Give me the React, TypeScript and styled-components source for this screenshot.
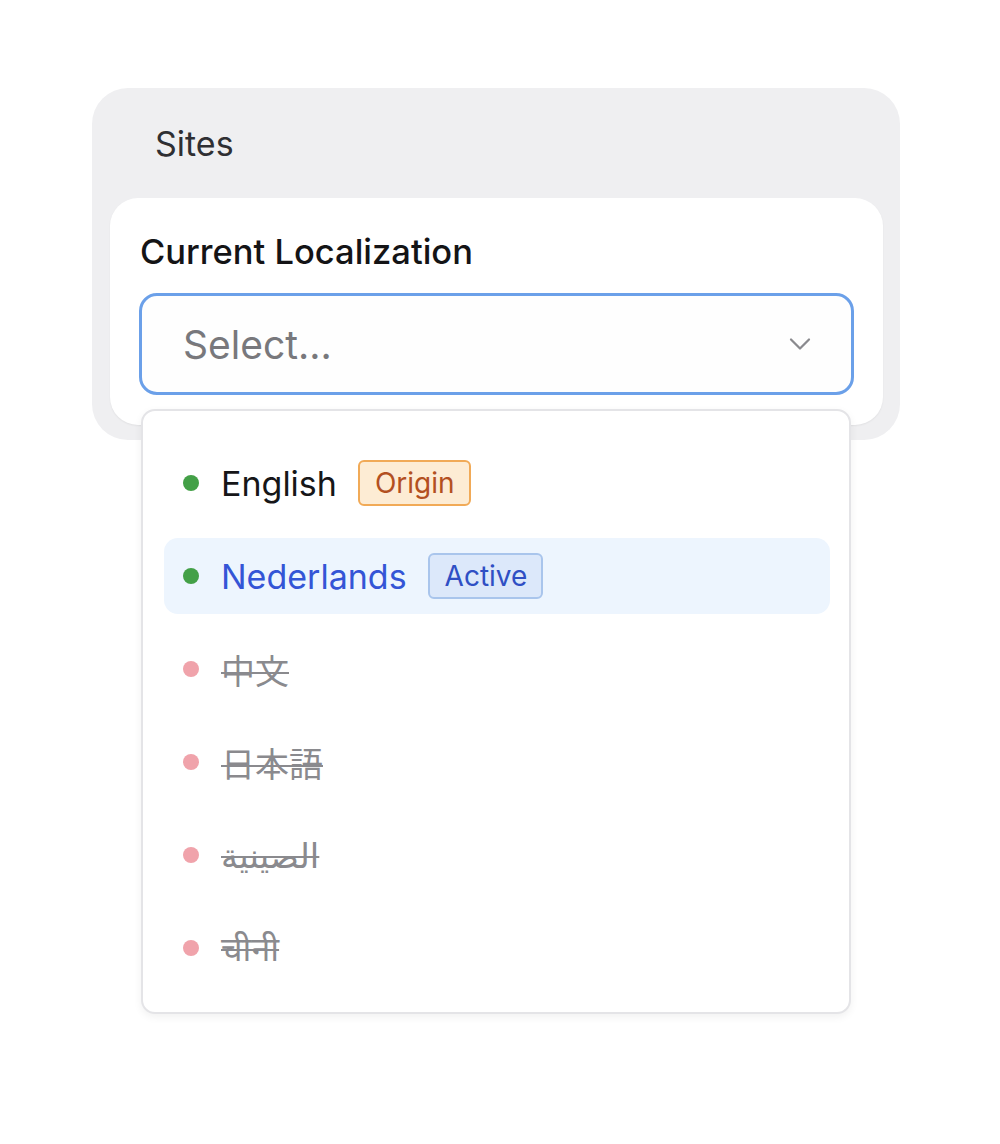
import React from 'react'
import styled, { createGlobalStyle } from 'styled-components'
import { ChevronDown } from 'lucide-react'

const GlobalStyle = createGlobalStyle`
  html, body {
    margin: 0;
    padding: 0;
    background: #ffffff;
  }
  body {
    font-family: Inter, "Noto Sans", "Noto Sans CJK SC", "DejaVu Sans", sans-serif;
    -webkit-font-smoothing: antialiased;
  }
`

const Page = styled.div`
  width: 1000px;
  height: 1144px;
  padding: 88px 0 0 92px;
  box-sizing: border-box;
`

const Panel = styled.div`
  width: 808px;
  background: #efeff1;
  border-radius: 36px;
  padding: 0 17px 15px 18px;
  box-sizing: border-box;
`

const PanelTitle = styled.div`
  padding: 35px 0 34px 45px;
  font-size: 34px;
  line-height: 41px;
  color: #2f2f33;
`

const Card = styled.div`
  background: #ffffff;
  border-radius: 28px;
  padding: 33px 29px 30px 29px;
  box-shadow: 0 1px 2px rgba(0, 0, 0, 0.06);
`

const Label = styled.div`
  font-size: 34.5px;
  line-height: 42px;
  font-weight: 500;
  color: #141416;
  margin: 0 0 20px 1px;
`

const SelectWrap = styled.div`
  position: relative;
`

const SelectBox = styled.div`
  height: 102px;
  box-sizing: border-box;
  border: 3px solid #6ba0e9;
  border-radius: 18px;
  display: flex;
  align-items: center;
  justify-content: space-between;
  padding: 0 33px 0 41px;
  background: #fefefe;
`

const Placeholder = styled.span`
  font-size: 39px;
  color: #78787c;
`

const Menu = styled.div`
  position: absolute;
  top: 116px;
  left: 2px;
  width: 710px;
  box-sizing: border-box;
  background: #ffffff;
  border: 2px solid #e4e4e7;
  border-radius: 14px;
  box-shadow: 0 3px 8px rgba(0, 0, 0, 0.06);
  padding: 34px 19px 26px 21px;
  display: flex;
  flex-direction: column;
  gap: 17px;
`

const Row = styled.div<{ $active?: boolean }>`
  height: 76px;
  display: flex;
  align-items: center;
  padding-left: 19px;
  border-radius: 14px;
  background: ${p => (p.$active ? '#edf5fe' : 'transparent')};
`

const Dot = styled.span<{ $ok: boolean }>`
  width: 16px;
  height: 16px;
  border-radius: 50%;
  background: ${p => (p.$ok ? '#43a047' : '#f0a3ab')};
  flex-shrink: 0;
  margin-right: 22px;
`

const Name = styled.span<{ $active?: boolean; $disabled?: boolean }>`
  font-size: 34px;
  color: ${p => (p.$active ? '#3455d6' : p.$disabled ? '#8a8a8e' : '#161618')};
  text-decoration: ${p => (p.$disabled ? 'line-through' : 'none')};
  text-decoration-thickness: 2px;
  font-family: Inter, "Noto Sans CJK JP", "DejaVu Sans", "Noto Sans", sans-serif;
`

const Badge = styled.span<{ $kind: 'origin' | 'active' }>`
  margin-left: 21px;
  height: 46px;
  box-sizing: border-box;
  display: inline-flex;
  align-items: center;
  padding: 0 14px 0 15px;
  font-size: 28px;
  border-radius: 6px;
  border: 2px solid ${p => (p.$kind === 'origin' ? '#f1aa57' : '#a9c5ec')};
  background: ${p => (p.$kind === 'origin' ? '#fdecd4' : '#dce8fa')};
  color: ${p => (p.$kind === 'origin' ? '#b3501f' : '#2f4fc4')};
`

type Locale = {
  name: string
  ok: boolean
  badge?: 'origin' | 'active'
}

const locales: Locale[] = [
  { name: 'English', ok: true, badge: 'origin' },
  { name: 'Nederlands', ok: true, badge: 'active' },
  { name: '中文', ok: false },
  { name: '日本語', ok: false },
  { name: 'الصينية', ok: false },
  { name: 'चीनी', ok: false },
]

const App = () => {
  return (
    <Page>
      <GlobalStyle />
      <Panel>
        <PanelTitle>Sites</PanelTitle>
        <Card>
          <Label>Current Localization</Label>
          <SelectWrap>
            <SelectBox>
              <Placeholder>Select...</Placeholder>
              <ChevronDown size={36} color="#8a8a8e" strokeWidth={1.5} />
            </SelectBox>
            <Menu>
              {locales.map(l => (
                <Row key={l.name} $active={l.badge === 'active'}>
                  <Dot $ok={l.ok} />
                  <Name $active={l.badge === 'active'} $disabled={!l.ok}>
                    {l.name}
                  </Name>
                  {l.badge && (
                    <Badge $kind={l.badge}>{l.badge === 'origin' ? 'Origin' : 'Active'}</Badge>
                  )}
                </Row>
              ))}
            </Menu>
          </SelectWrap>
        </Card>
      </Panel>
    </Page>
  )
}

export default App
